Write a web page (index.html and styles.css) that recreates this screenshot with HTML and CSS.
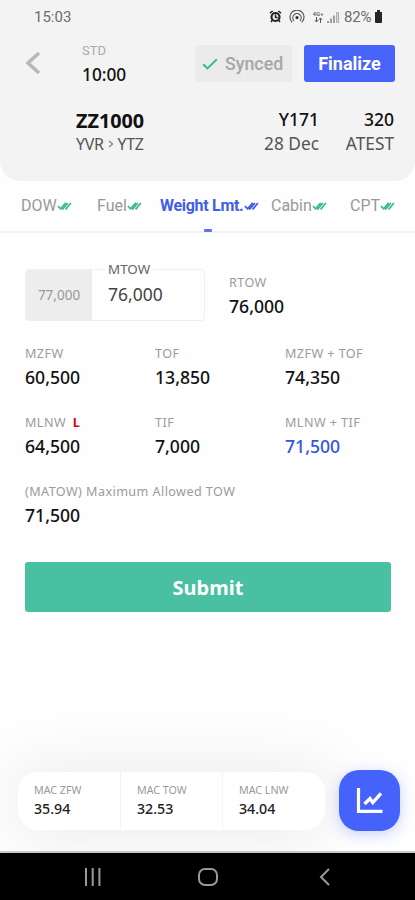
FILE: index.html
```html
<!DOCTYPE html>
<html lang="en">
<head>
<meta charset="utf-8">
<title>Weight limits</title>
<link rel="stylesheet" href="styles.css">
</head>
<body>
<svg class="defs" width="0" height="0">
  <symbol id="ticks" viewBox="0 0 16 10">
    <path d="M1 5.2 3.8 8 9.4 1.6M5.2 7.2 6.2 8.2 11.6 1.8M9 7.4 9.8 8 14.8 1.8" fill="none" stroke="currentColor" stroke-width="1.9"/>
  </symbol>
</svg>
<div class="screen">
  <header class="header">
    <div class="status">
      <span class="clock">15:03</span>
      <div class="status-icons">
        <svg class="alarm" width="13" height="13" viewBox="0 0 13 13"><circle cx="6.5" cy="7" r="4" fill="none" stroke="#222" stroke-width="2.2"/><path d="M1 3.2 3.7 1M12 3.2 9.3 1M3.5 10 2 12M9.5 10 11 12M6.5 4.5V7.3L8.6 7.8" fill="none" stroke="#222" stroke-width="1.5"/></svg>
        <svg class="hotspot" width="16" height="14" viewBox="0 0 16 14"><path d="M3.2 12.2A7 7 0 1 1 12.8 12.2M5 10.8A4.2 4.2 0 1 1 11 10.8" fill="none" stroke="#555" stroke-width="1.2"/><circle cx="8" cy="7.6" r="1.6" fill="#333"/></svg>
        <span class="net"><b>4G+</b><svg width="9" height="6" viewBox="0 0 9 6"><path d="M2.5 0V5M.8 3.2 2.5 5 4.2 3.2M6.5 6V1M4.8 2.8 6.5 1 8.2 2.8" fill="none" stroke="#555"/></svg></span>
        <svg class="signal" width="13" height="12" viewBox="0 0 13 12"><path d="M1 10V12M4 7.5V12M7 4.5V12" stroke="#777" stroke-width="1.4"/><path d="M9.6 1.5H11.6V11.5H9.6Z" fill="#ddd" stroke="#999" stroke-width=".8"/></svg>
        <span class="percent">82%</span>
        <svg width="9" height="13" viewBox="0 0 9 13"><path d="M3 0H6V2H8V12Q8 13 7 13H2Q1 13 1 12V2H3Z" fill="#262626"/></svg>
      </div>
    </div>
    <div class="topline">
      <svg class="back" width="16" height="24" viewBox="0 0 16 24"><path d="M14 2 3 12 14 22" fill="none" stroke="#b8b8b8" stroke-width="3.6"/></svg>
      <div class="std"><span>STD</span><strong>10:00</strong></div>
      <div class="synced"><svg width="16" height="12" viewBox="0 0 16 12"><path d="M1.2 6.2 5.4 10.4 14.8 1.4" fill="none" stroke="#35b98c" stroke-width="2"/></svg>Synced</div>
      <div class="finalize">Finalize</div>
    </div>
    <div class="flight">
      <div class="route"><strong>ZZ1000</strong><span>YVR <svg width="6" height="8" viewBox="0 0 6 8"><path d="M1 .8 4.6 4 1 7.2" fill="none" stroke="#777" stroke-width="1.1"/></svg> YTZ</span></div>
      <div class="meta config"><b>Y171</b><span>28 Dec</span></div>
      <div class="meta type"><b>320</b><span>ATEST</span></div>
    </div>
  </header>
  <nav class="tabs">
    <div class="tab dow">DOW<svg><use href="#ticks"/></svg></div>
    <div class="tab fuel">Fuel<svg><use href="#ticks"/></svg></div>
    <div class="tab active">Weight Lmt.<svg><use href="#ticks"/></svg></div>
    <div class="tab cabin">Cabin<svg><use href="#ticks"/></svg></div>
    <div class="tab cpt">CPT<svg><use href="#ticks"/></svg></div>
  </nav>
  <main class="main">
    <div class="entry">
      <div class="field"><span class="prior">77,000</span><span class="value">76,000</span><span class="legend">MTOW</span></div>
      <div class="item rtow"><label>RTOW</label><strong>76,000</strong></div>
    </div>
    <div class="grid">
      <div class="item"><label>MZFW</label><strong>60,500</strong></div>
      <div class="item"><label>TOF</label><strong>13,850</strong></div>
      <div class="item"><label>MZFW + TOF</label><strong>74,350</strong></div>
      <div class="item"><label>MLNW <b>L</b></label><strong>64,500</strong></div>
      <div class="item"><label>TIF</label><strong>7,000</strong></div>
      <div class="item limit"><label>MLNW + TIF</label><strong>71,500</strong></div>
      <div class="item wide"><label>(MATOW) Maximum Allowed TOW</label><strong>71,500</strong></div>
    </div>
    <div class="submit">Submit</div>
  </main>
  <footer class="footer">
    <div class="mac">
      <div><span>MAC ZFW</span><strong>35.94</strong></div>
      <div><span>MAC TOW</span><strong>32.53</strong></div>
      <div><span>MAC LNW</span><strong>34.04</strong></div>
    </div>
    <div class="chart"><svg width="27" height="26" viewBox="0 0 27 26"><path d="M2.5 0V23.4H26.5" fill="none" stroke="#fff" stroke-width="3.2"/><path d="M8.5 16 14 10.6 16.8 14.6 25 5.4" fill="none" stroke="#fff" stroke-width="3.4"/></svg></div>
  </footer>
  <div class="navbar">
    <svg width="18" height="18" viewBox="0 0 18 18"><path d="M2 0V18M8.7 0V18M15.4 0V18" stroke="#999" stroke-width="2"/></svg>
    <svg class="home" width="20" height="18" viewBox="0 0 20 18"><rect x="1" y="1" width="18" height="16" rx="6" fill="none" stroke="#999" stroke-width="2"/></svg>
    <svg width="12" height="18" viewBox="0 0 12 18"><path d="M10 1 2 9 10 17" fill="none" stroke="#999" stroke-width="2"/></svg>
  </div>
</div>
</body>
</html>
```
FILE: styles.css
```css
* { box-sizing: border-box; }
body { margin: 0; background: #fff; font-family: "Noto Sans", sans-serif; color: #111; }
svg { display: block; flex: none; }
.defs { position: absolute; }
.screen { width: 415px; height: 900px; display: flex; flex-direction: column; overflow: hidden; background: #fefefe; }
.header { height: 181px; background: #f3f3f3; border-radius: 0 0 20px 20px; flex: none; }
.status { height: 33px; padding: 0 32px 0 34px; display: flex; justify-content: space-between; align-items: center; font-family: Roboto, sans-serif; color: #6c6c6c; }
.clock { font-size: 15px; }
.status-icons { display: flex; align-items: center; }
.hotspot { margin-left: 7px; }
.net { margin-left: 7px; width: 12px; display: flex; flex-direction: column; align-items: center; }
.net b { font-size: 6px; line-height: 6px; }
.signal { margin: 0 4px 0 3px; }
.percent { font-size: 15px; width: 30px; white-space: nowrap; letter-spacing: -.2px; }
.topline { height: 68px; display: flex; padding: 0 20px 0 25px; }
.back { margin-top: 18px; }
.std { width: 113px; margin-left: 41px; padding-top: 9px; display: flex; flex-direction: column; }
.std span { font-family: Roboto, sans-serif; font-size: 13px; line-height: 17px; color: #aaa; }
.std strong { font-size: 17.3px; line-height: 24px; font-weight: 500; margin-top: 4px; }
.synced, .finalize { height: 37px; margin-top: 12px; border-radius: 3px; font: 500 17.8px/37px Roboto, sans-serif; display: flex; align-items: center; }
.synced { width: 97px; padding-left: 7px; gap: 7px; background: #ebebeb; color: #a6a6a6; }
.finalize { width: 91px; margin-left: 12px; justify-content: center; background: #4763fa; color: #fff; font-weight: 700; font-size: 18px; }
.flight { display: flex; padding: 8px 21px 0 76px; }
.flight strong { font-size: 19.8px; line-height: 24px; }
.flight b { font-size: 17.5px; line-height: 23px; font-weight: 500; }
.flight span { font-size: 16px; line-height: 24px; color: #555; display: flex; align-items: center; gap: 5px; }
.route, .meta { display: flex; flex-direction: column; }
.route { width: 110px; }
.flight .route span { font-size: 16px; line-height: 22px; gap: 4px; letter-spacing: -.35px; }
.meta { align-items: flex-end; margin-top: -1px; }
.flight .meta span { font-size: 17.3px; line-height: 25px; }
.config { margin-left: auto; }
.type { width: 75px; }
.tabs { height: 52px; flex: none; display: flex; padding-left: 21px; border-bottom: 2px solid #f3f3f3; font: 400 16px/50px Roboto, sans-serif; color: #999; }
.tab { display: flex; align-items: center; white-space: nowrap; height: 50px; }
.tab svg { width: 15px; height: 10px; color: #3fbd91; }
.dow { width: 76px; }
.fuel { width: 63px; }
.active { width: 111px; font-weight: 700; color: #405ee6; position: relative; letter-spacing: -.3px; }
.tab.active svg { color: #405ee6; margin-left: 1px; }
.active::after { content: ""; position: absolute; left: 44px; bottom: -1px; width: 8px; height: 3px; background: #5b73ef; border-radius: 1px; }
.cabin { width: 79px; }
.main { padding: 36px 24px 0 25px; }
.entry { display: flex; }
.field { width: 180px; height: 52px; border: 1px solid #f0f0f0; border-radius: 4px; display: flex; position: relative; }
.prior { width: 66px; background: #ededed; font-size: 13.5px; line-height: 50px; text-align: center; color: #999; }
.value { padding-left: 16px; font-size: 17.5px; line-height: 49px; color: #444; }
.legend { position: absolute; left: 79px; top: -10px; padding: 0 3px; background: #fefefe; font-size: 13.4px; line-height: 18px; color: #666; }
.item { display: flex; flex-direction: column; }
.item label { font-size: 12.6px; line-height: 20px; color: #9b9b9b; white-space: nowrap; letter-spacing: .43px; padding-top: 1px; }
.item label b { color: #e3000f; margin-left: 3px; }
.item strong { font-size: 17.6px; line-height: 24px; font-weight: 500; margin-top: 1px; }
.rtow { margin: 3px 0 0 24px; }
.rtow strong { margin-bottom: 1px; }
.grid { display: grid; grid-template-columns: 130px 130px auto; row-gap: 23px; margin-top: 22px; }
.limit strong { color: #3156e0; }
.wide { grid-column: 1 / -1; }
.submit { height: 50px; margin-top: 35px; background: #49c0a2; border-radius: 3px; text-align: center; font-size: 20px; font-weight: 700; line-height: 51px; color: #fff; }
.footer { margin-top: auto; height: 160px; flex: none; padding: 79px 15px 0 18px; display: flex; justify-content: space-between; border-bottom: 2px solid #ccc; }
.mac { width: 307px; height: 58px; display: grid; grid-template-columns: repeat(3, 102px); background: #fff; border-radius: 20px; box-shadow: 0 0 60px 8px rgba(0,0,0,.07); }
.mac div { padding: 10px 0 0 16px; height: 58px; display: flex; flex-direction: column; }
.mac div + div { border-left: 1px solid #f4f4f4; }
.mac span { font-size: 10.7px; line-height: 16px; color: #999; }
.mac strong { font-size: 14.2px; line-height: 22px; font-weight: 500; color: #222; }
.chart { width: 61px; height: 61px; margin-top: -2px; border-radius: 20px; background: #4562fa; display: flex; align-items: center; justify-content: center; box-shadow: 0 3px 14px rgba(69,98,250,.3); }
.navbar { height: 47px; flex: none; background: #000; display: flex; align-items: center; padding: 0 84px; justify-content: space-between; }
.navbar .home { margin-right: 5px; }
```
